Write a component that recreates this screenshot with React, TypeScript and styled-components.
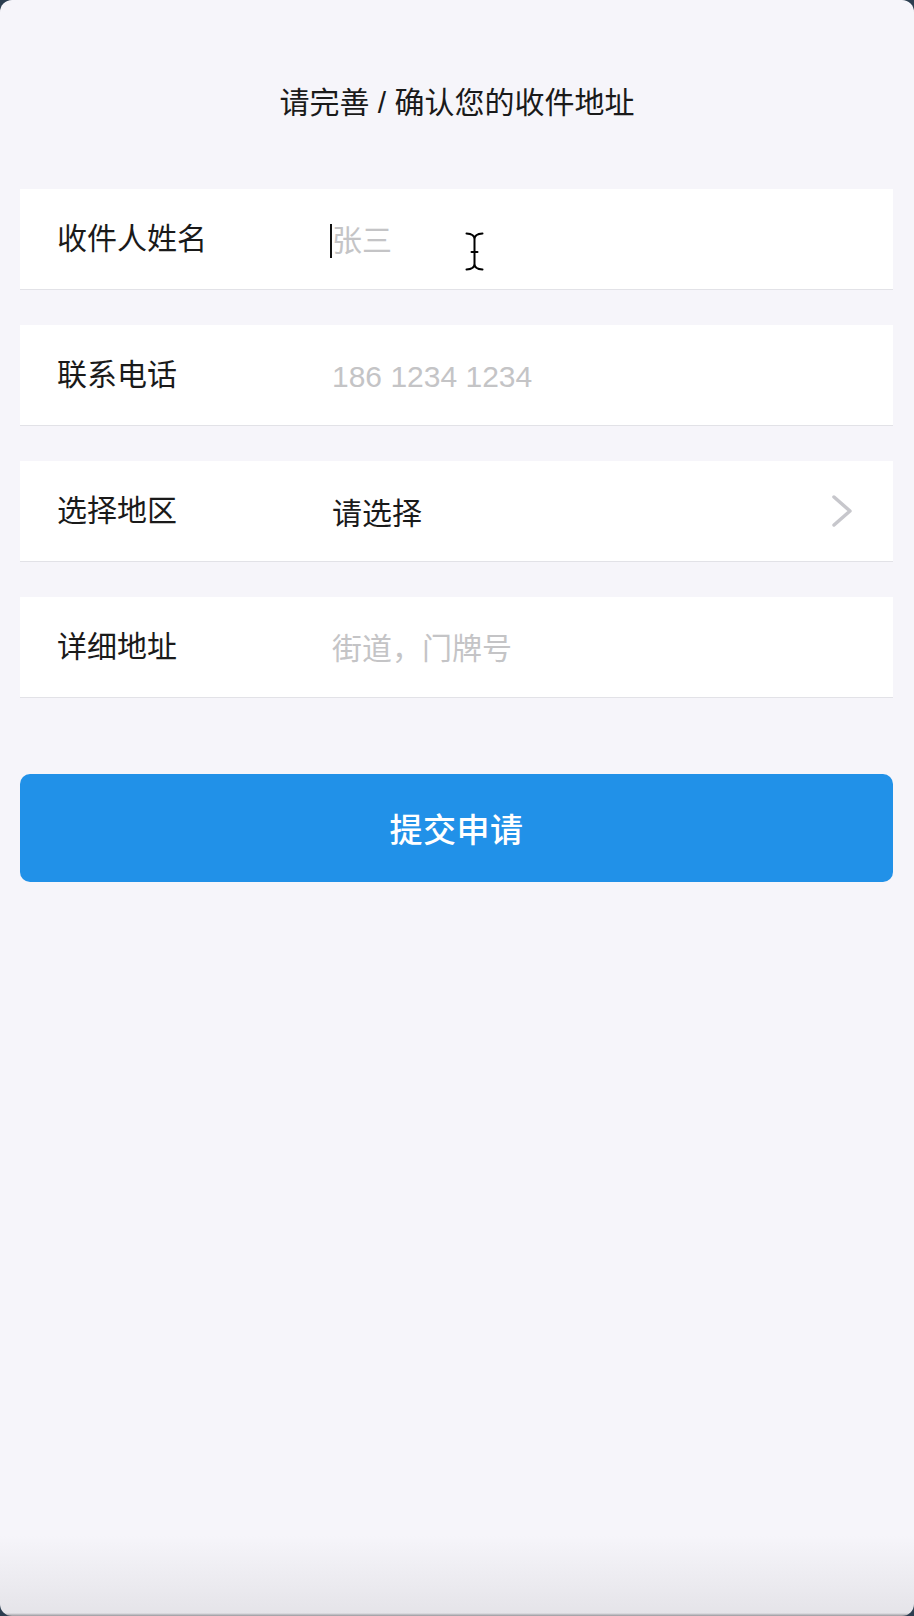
import React from 'react';
import styled, { createGlobalStyle } from 'styled-components';

const GlobalStyle = createGlobalStyle`
  html, body {
    margin: 0;
    padding: 0;
    background: #2c3e50;
  }
  * {
    box-sizing: border-box;
  }
`;

const FONT = `"Liberation Sans", "Noto Sans CJK SC", sans-serif`;

const Frame = styled.div`
  position: relative;
  width: 914px;
  height: 1616px;
  border-radius: 12px;
  overflow: hidden;
  display: flex;
  flex-direction: column;
  font-family: ${FONT};
  background: linear-gradient(
    to bottom,
    #f6f5fa 0,
    #f6f5fa calc(100% - 80px),
    #e5e4e9 calc(100% - 3px),
    #9a999e 100%
  );
`;

const Title = styled.h1`
  margin: 82px 0 0;
  text-align: center;
  font-size: 30px;
  line-height: 42px;
  font-weight: 400;
  color: #1a1a1a;
`;

const Form = styled.div`
  display: flex;
  flex-direction: column;
  gap: 35px;
  margin-top: 65px;
  padding: 0 21px 0 20px;
`;

const Row = styled.div`
  position: relative;
  display: flex;
  align-items: center;
  height: 101px;
  padding: 0 40px 0 37px;
  background: #fff;
  border-bottom: 1.5px solid #e2e2e7;
`;

const Label = styled.span`
  width: 275px;
  flex-shrink: 0;
  margin-bottom: 6px;
  font-size: 30px;
  color: #1a1a1a;
`;

const Field = styled.input`
  flex: 1;
  min-width: 0;
  margin-top: 4px;
  border: none;
  outline: none;
  padding: 0;
  background: transparent;
  font-family: ${FONT};
  font-size: 30px;
  color: #1a1a1a;
  caret-color: transparent;

  &::placeholder {
    color: #c4c4c6;
  }
`;

const Value = styled.span`
  flex: 1;
  font-size: 30px;
  color: #1a1a1a;
`;

const Caret = styled.span`
  position: absolute;
  left: 310px;
  top: 35px;
  width: 2px;
  height: 34px;
  background: #111;
`;

const MouseCursor = styled.svg`
  position: absolute;
  left: 465px;
  top: 232px;
`;

const SubmitButton = styled.button`
  margin: 76px 21px 0 20px;
  height: 108px;
  border: none;
  border-radius: 10px;
  background: #2191e8;
  color: #fff;
  font-family: ${FONT};
  font-size: 33px;
  font-weight: 500;
  letter-spacing: 0.5px;
`;

const Chevron = () => (
  <svg width="22" height="34" viewBox="0 0 22 34">
    <polyline
      points="3,3 19,17 3,31"
      fill="none"
      stroke="#c7c7cc"
      strokeWidth="3.5"
      strokeLinecap="round"
      strokeLinejoin="round"
    />
  </svg>
);

export default function App() {
  return (
    <>
      <GlobalStyle />
      <Frame>
        <Title>请完善 / 确认您的收件地址</Title>
        <Form>
          <Row>
            <Label>收件人姓名</Label>
            <Field placeholder="张三" />
            <Caret />
          </Row>
          <Row>
            <Label>联系电话</Label>
            <Field placeholder="186 1234 1234" />
          </Row>
          <Row>
            <Label>选择地区</Label>
            <Value>请选择</Value>
            <Chevron />
          </Row>
          <Row>
            <Label>详细地址</Label>
            <Field placeholder="街道，门牌号" />
          </Row>
        </Form>
        <SubmitButton>提交申请</SubmitButton>
        <MouseCursor width="19" height="39" viewBox="0 0 19 39">
          <path
            d="M1.5 1.5 Q9.5 2 9.5 7 Q9.5 2 17.5 1.5 M9.5 7 V32 M1.5 37.5 Q9.5 37 9.5 32 Q9.5 37 17.5 37.5 M6.5 20 H12.5"
            fill="none"
            stroke="#000"
            strokeWidth="2"
            strokeLinecap="round"
          />
        </MouseCursor>
      </Frame>
    </>
  );
}
